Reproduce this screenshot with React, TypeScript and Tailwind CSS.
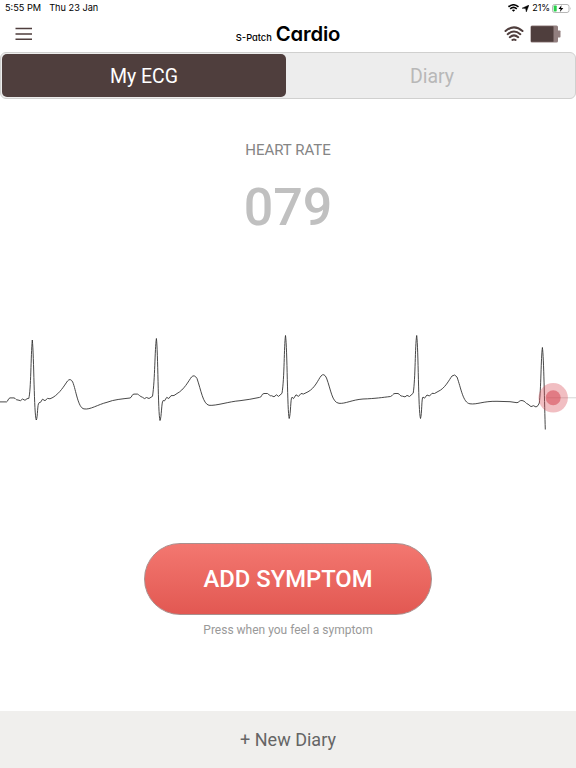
import { useState } from 'react';

const ECG_PATH = [
  'M0 401.9 H6.5 C8 401.6 8 398.3 10 397.9 H14 C16 398.5 15.5 400 18 400 L20.5 400.7 L22.5 399 L25 400.3 L27 398.7 L28.8 398.4',
  'C31 390 30.8 356 32.3 340 C34 356 34 415 36.3 420 C37.8 417 37.3 404 39 402.8 L40.5 402.3 L42.5 399.2 L45 400.7 L47.5 398.4 L50 398.8 L53 397.4',
  'C60 393 64 386 67.5 381 Q70.3 377.7 72.7 382 C76 390 78 408 84 408.9 C90 410 98 404.5 107 402.3 C114 399.5 122 399 130 398',
  'C132 397.5 131.8 394 134 394.1 H137.5 C139 394.7 140 396.5 142.5 397.3 L144.5 398.6 L146.5 397.5 L149 398.5 L152.5 396.3',
  'C155 380 154.8 349 156.4 338.5 C158 350 158 414 160 420.5 C161.5 418 161.5 402 163 400.6 L164.5 400.9 L166.7 397.4 L168.8 398.5 L171 395.7 L174 395.5 L177 393.5',
  'C184 390 188.5 381 191.5 377 Q194.3 374 197 378.5 C201 390 203 404 209 405.3 C216 406 229 401.5 240 400.7 Q250 399.5 259.5 397.4',
  'C261.5 398 261.5 393.5 264 393.5 H267.5 C269 394 269.5 396.5 271.5 395.7 L274 396.8 L276.5 394.8 L278.5 396.4 L282 393.3',
  'C284.5 378 284 346 285.5 335.5 C287.3 348 287.3 412 289.2 418.5 C290.8 414 290.5 398 292 397.2 L293.5 398.6 L296 394.8 L298.5 396.4 L301 393.5 L303.5 394 L308 391.8',
  'C315 388 318 380 321 376 Q324 372.5 326.5 378 C331 390 332 402.5 339 403.3 C345 404 352 399.8 363 399 C375 398.6 383 397.4 390.5 396.5',
  'C392.5 396 393 393.3 395 393.5 H398 C400 394.1 400 396.5 402.5 396.2 L405 396.9 L407 395.4 L409.5 396.5 L413.2 393.2',
  'C415.5 378 415 346 416.7 335.5 C418.4 348 418.3 412 420.5 418.5 C422 414 421.5 397.5 423 397 L424.5 398.2 L427 395 L429.5 396 L432 393.3 L434.5 393.5 L438 391.5',
  'C445 388.5 449 380 452 376 Q454.8 373.5 457 377 C461 388 463 403 470 403.8 C477 404.8 483 401 497 401.3 L510 401.7 L517 402.7 C519 402.5 519 400.3 522 400.5 C525.5 401 525.5 403.6 528 404.2 L531 406.6 L533.5 405.7 L536 407 L538 405.6 L539.3 403',
  'C541 390 541 357 542.4 347.5 C543.8 357 544.5 405 545.3 429.5',
].join(' ');

function StatusBar() {
  return (
    <div className="flex h-4 items-center justify-between pl-[5px] pr-1 font-['Inter',sans-serif] text-[9.2px] leading-4 text-black">
      <div className="flex gap-2">
        <span>5:55 PM</span>
        <span>Thu 23 Jan</span>
      </div>
      <div className="flex items-center">
        <svg width="11" height="8" viewBox="0 0 11 8" fill="none" stroke="currentColor" strokeWidth="1.6">
          <path d="M.5 2.8Q5.5-1.2 10.5 2.8M2.2 4.8Q5.5 2 8.8 4.8" />
          <path d="M3.8 6L5.5 7.8L7.2 6Q5.5 4.8 3.8 6" fill="currentColor" stroke="none" />
        </svg>
        <svg className="ml-[3px]" width="7" height="7" viewBox="0 0 7 7" fill="currentColor">
          <path d="M7 0L4.3 7L3.6 3.6L0 3.2Z" stroke="currentColor" strokeWidth=".4" />
        </svg>
        <span className="ml-[3px] text-[9px] tracking-[-0.1px]">21%</span>
        <svg className="ml-[2px]" width="20" height="9" viewBox="0 0 20 9">
          <rect x=".5" y=".5" width="16.5" height="8" rx="2" fill="none" stroke="#a5a5a5" strokeWidth=".8" />
          <rect x="1.7" y="1.6" width="3" height="5.8" rx=".7" fill="#28cf4b" />
          <path d="M9.5 1.2L6.5 4.9H8.6L7.9 7.9L11.3 4H9.1Z" fill="black" />
          <path d="M18.3 3V6Q19.4 4.5 18.3 3" fill="#a5a5a5" />
        </svg>
      </div>
    </div>
  );
}

function Header() {
  return (
    <header className="grid h-9 grid-cols-3 items-center px-[15px] text-[#4f3e3d]">
      <button aria-label="Menu" className="w-fit">
        <svg width="17" height="14" viewBox="0 0 17 14" stroke="currentColor" strokeWidth="1.4">
          <path d="M.5 1.5H17M.5 7H17M.5 12.3H17" />
        </svg>
      </button>
      <h1 className="flex items-baseline justify-center gap-1 whitespace-nowrap font-['Inter',sans-serif] text-black [font-feature-settings:'cv11']">
        <span className="text-[9.3px] font-medium">S-Patch</span>
        <span className="text-[20.3px] font-semibold tracking-[-0.2px]">Cardio</span>
      </h1>
      <div className="flex items-center justify-end gap-[6px]">
        <svg width="20" height="16" viewBox="0 0 20 16" fill="none" stroke="currentColor" strokeWidth="2" strokeLinecap="round">
          <path d="M1.5 5Q10-2.2 18.5 5M3.7 8.2Q10 2.8 16.3 8.2M5.8 11.2Q10 7.5 14.2 11.2M8.4 14Q10 12.8 11.6 14" />
        </svg>
        <svg width="31" height="18" viewBox="0 0 31 18">
          <rect x=".5" y=".5" width="27.5" height="17" rx="1.5" fill="#927f7f" />
          <rect x="27" y="5.5" width="3.5" height="7" rx=".7" fill="#927f7f" />
          <rect x="1" y="1.2" width="22.5" height="15.5" rx=".5" fill="#4f3e3d" />
        </svg>
      </div>
    </header>
  );
}

export default function App() {
  const [tab, setTab] = useState('ecg');
  const active = 'bg-[#4f3e3d] text-white';
  const inactive = 'text-[#b8b8b8]';

  return (
    <div className="flex h-screen w-full flex-col overflow-hidden bg-white font-['Roboto',sans-serif]">
      <StatusBar />
      <Header />

      {/* Tabs */}
      <nav className="flex h-[47px] w-full rounded-md border border-[#d0d0cf] bg-[#ededed] p-px text-[19.5px]">
        <button
          onClick={() => setTab('ecg')}
          className={`flex-1 rounded-[5px] pt-[2px] ${tab === 'ecg' ? active : inactive}`}
        >
          My ECG
        </button>
        <button
          onClick={() => setTab('diary')}
          className={`ml-1 flex-1 rounded-[5px] pt-[2px] ${tab === 'diary' ? active : inactive}`}
        >
          Diary
        </button>
      </nav>

      {/* Heart rate */}
      <section className="flex flex-col items-center pt-[41px]">
        <h2 className="text-[15px] leading-5 text-[#858585]">HEART RATE</h2>
        <p className="mt-[18px] text-[52px] font-medium leading-[60px] text-[#c0c0c0]">079</p>
      </section>

      {/* ECG trace */}
      <svg className="mt-[87px] shrink-0" width="576" height="110" viewBox="0 325 576 110" fill="none">
        <path d="M547 397.8H576" stroke="#d5d5d5" />
        <path d={ECG_PATH} stroke="#333" strokeWidth=".9" strokeLinejoin="round" />
        <circle cx="553.2" cy="397.8" r="14.7" fill="#d94a56" fillOpacity=".36" />
        <circle cx="553.2" cy="397.8" r="7.5" fill="#d3404d" fillOpacity=".53" />
      </svg>

      {/* Symptom */}
      <section className="flex flex-col items-center pt-[108px]">
        <button className="h-[72px] w-[288px] rounded-full border border-[#a98f8d] bg-linear-to-b from-[#f37770] to-[#e25852] pt-[2px] text-[23.8px] font-medium text-white">
          ADD SYMPTOM
        </button>
        <p className="mt-[7px] text-[12px] leading-4 text-[#999]">Press when you feel a symptom</p>
      </section>

      <button className="mt-auto h-[57px] w-full bg-[#f0efed] text-[18px] text-[#656565]">
        + New Diary
      </button>
    </div>
  );
}
